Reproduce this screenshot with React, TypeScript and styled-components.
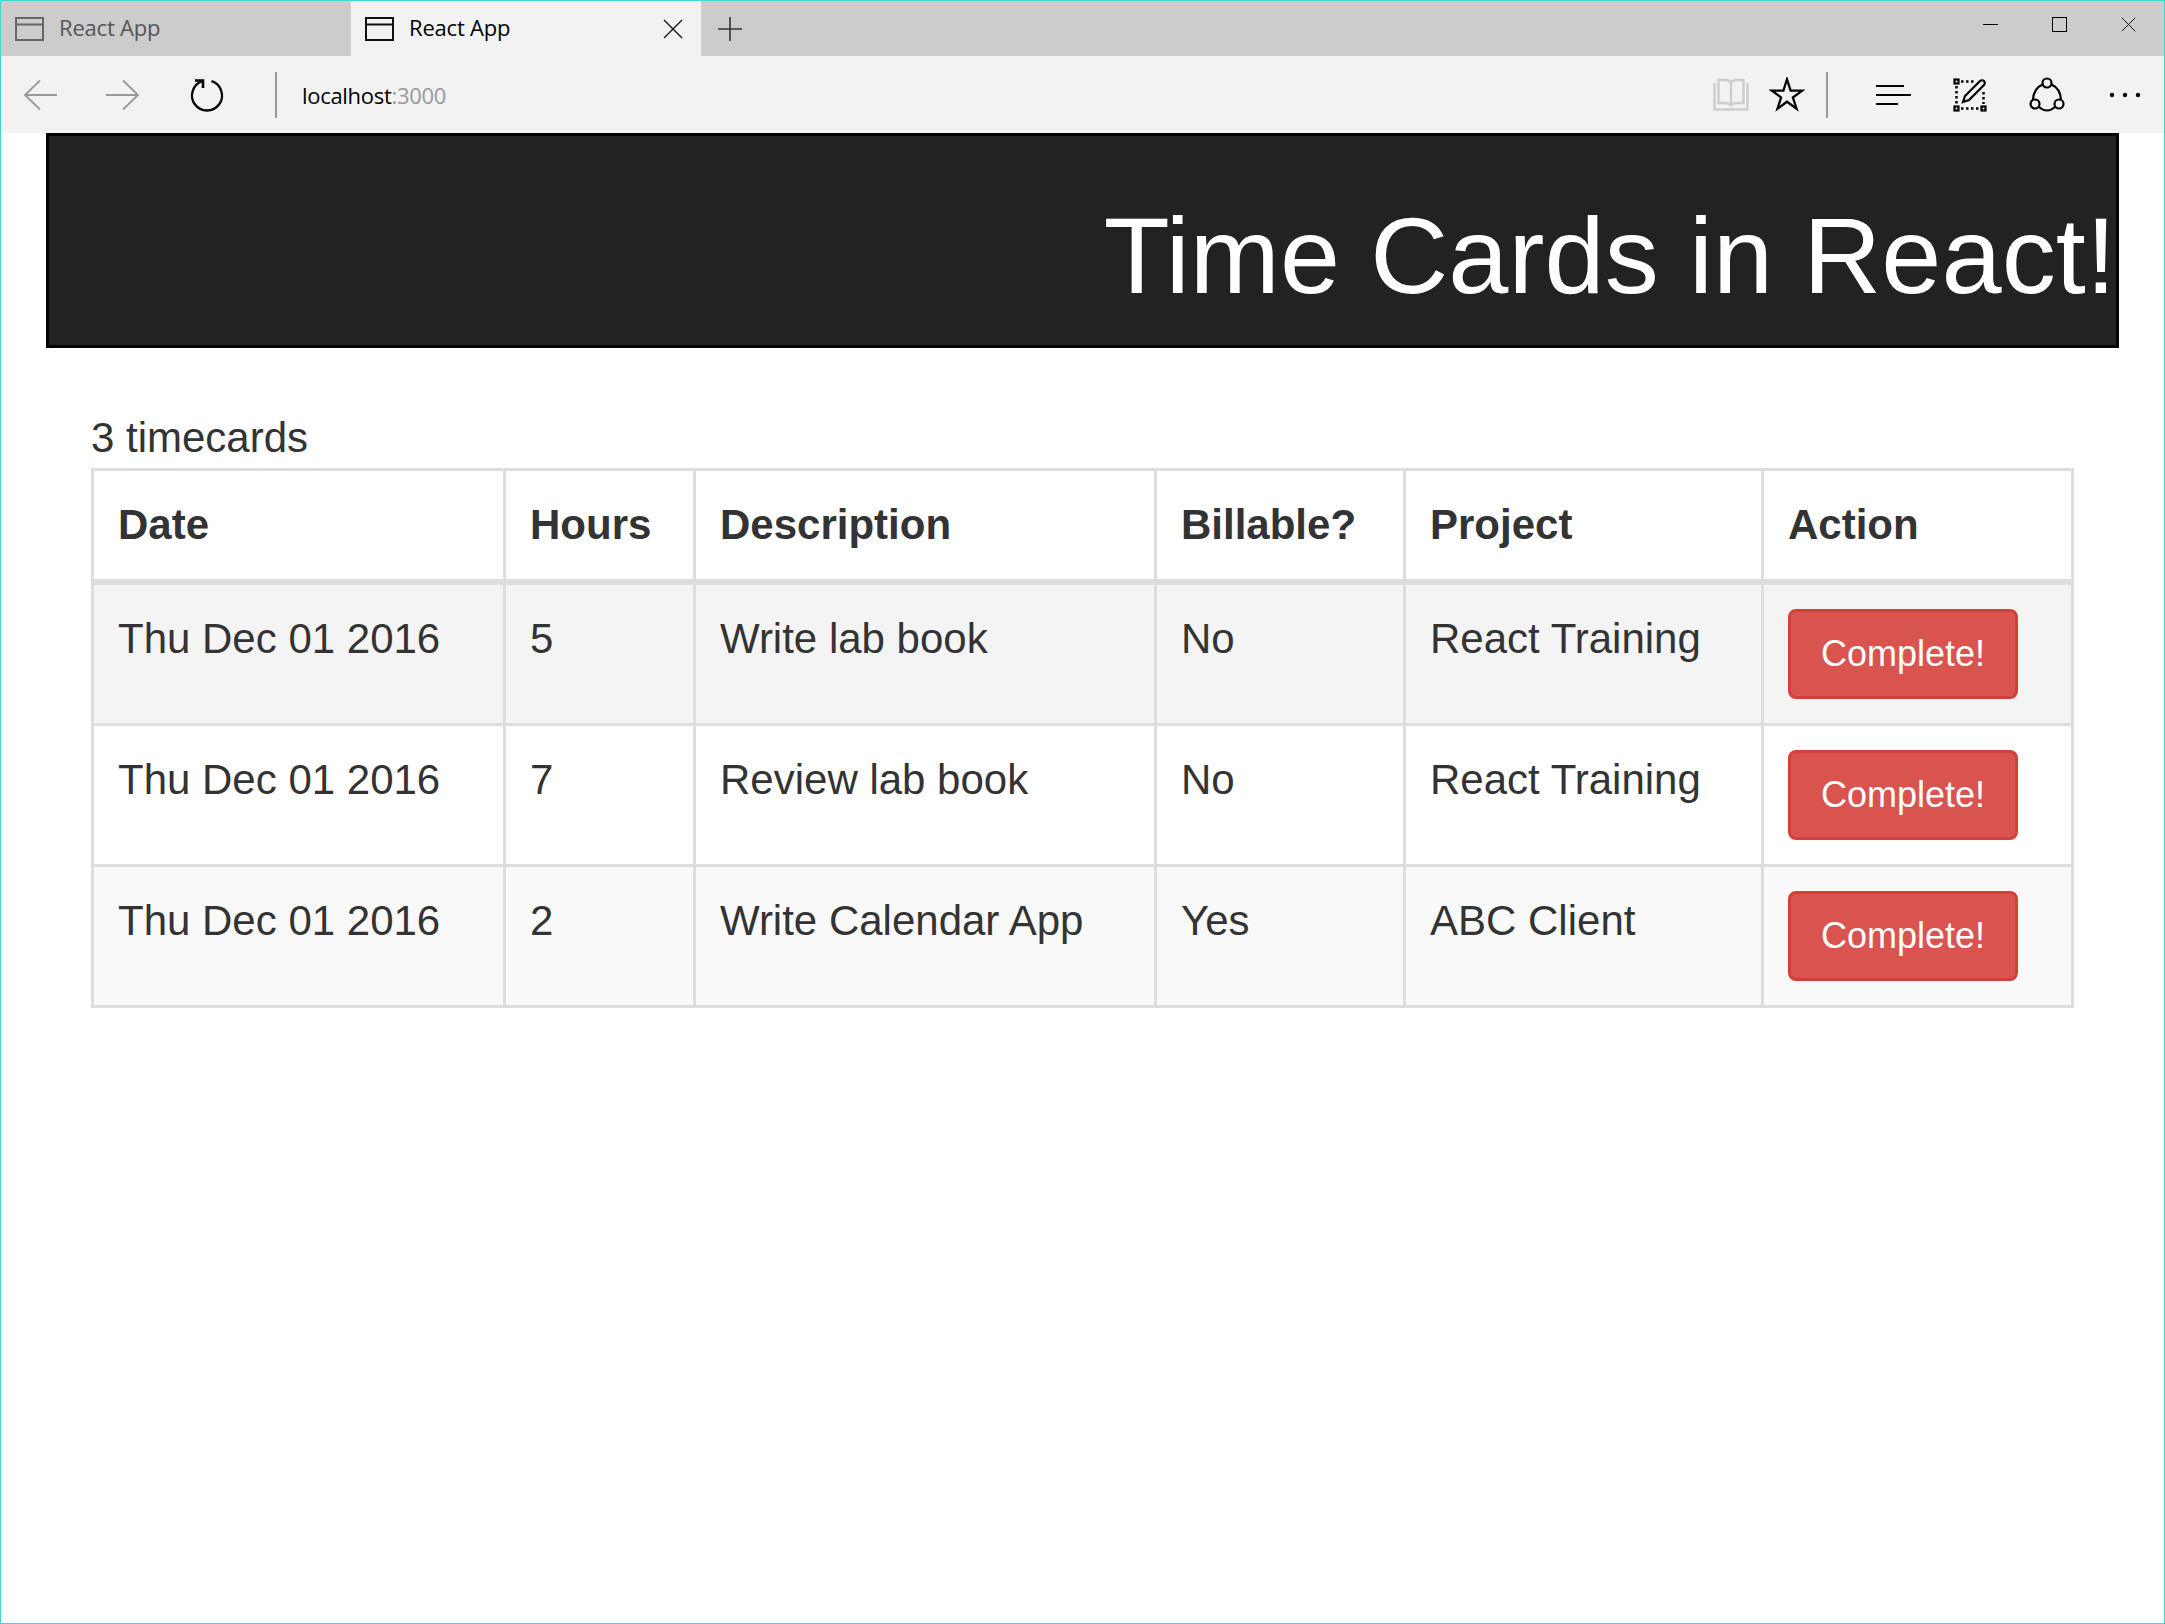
import React from 'react';
import styled, { createGlobalStyle } from 'styled-components';

const GlobalStyle = createGlobalStyle`
  html, body {
    margin: 0;
    padding: 0;
    background: #ffffff;
  }
`;

const Window = styled.div`
  box-sizing: border-box;
  width: 2165px;
  height: 1624px;
  border: 1px solid #3fd6d6;
  background: #ffffff;
  font-family: 'Liberation Sans', Arial, sans-serif;
  color: #333333;
  overflow: hidden;
`;

const TabBar = styled.div`
  display: flex;
  align-items: stretch;
  height: 55px;
  background: #cccccc;
`;

const Tab = styled.div<{ $active?: boolean }>`
  box-sizing: border-box;
  display: flex;
  align-items: center;
  width: 350px;
  padding-left: 14px;
  gap: 14px;
  background: ${(props) => (props.$active ? '#f2f2f2' : '#cccccc')};
  color: ${(props) => (props.$active ? '#000000' : '#555555')};
  font-family: 'Open Sans', 'Noto Sans', sans-serif;
  font-size: 22px;
  letter-spacing: -0.2px;
`;

const TabTitle = styled.span`
  flex: 1;
  padding-bottom: 4px;
`;

const CloseTab = styled.span`
  display: flex;
  margin-right: 18px;
`;

const NewTab = styled.span`
  display: flex;
  align-items: center;
  margin-left: 16px;
`;

const WindowControls = styled.div`
  display: flex;
  align-items: center;
  gap: 54px;
  margin-left: auto;
  padding: 0 28px 8px 0;
`;

const Toolbar = styled.div`
  display: flex;
  align-items: center;
  height: 77px;
  background: #f2f2f2;
`;

const NavGroup = styled.div`
  display: flex;
  align-items: center;
  gap: 49px;
  padding-left: 22px;
`;

const Divider = styled.span<{ $gap: number }>`
  width: 2px;
  height: 46px;
  background: #999999;
  margin-left: ${(props) => props.$gap}px;
`;

const Address = styled.div`
  flex: 1;
  margin-left: 25px;
  font-family: 'Open Sans', 'Noto Sans', sans-serif;
  font-size: 22px;
  letter-spacing: -0.3px;
  color: #000000;
`;

const Port = styled.span`
  color: #999999;
`;

const ToolGroup = styled.div`
  display: flex;
  align-items: center;
`;

const ToolSlot = styled.span<{ $left: number }>`
  display: flex;
  margin-left: ${(props) => props.$left}px;
`;

const Banner = styled.header`
  box-sizing: border-box;
  height: 215px;
  margin: 0 45px;
  padding-top: 60px;
  background: #222222;
  border: 3px solid #000000;
  text-align: right;
`;

const BannerTitle = styled.h1`
  margin: 0;
  color: #ffffff;
  font-size: 108px;
  font-weight: 400;
  line-height: 119px;
  letter-spacing: 0.1px;
`;

const Content = styled.main`
  padding: 60px 90px 0;
`;

const Count = styled.div`
  font-size: 42px;
  line-height: 60px;
`;

const Table = styled.table`
  table-layout: fixed;
  width: 1980px;
  border-collapse: collapse;
  font-size: 42px;
  line-height: 60px;
`;

const HeadCell = styled.th`
  padding: 24px;
  border: 3px solid #dddddd;
  border-bottom-width: 6px;
  text-align: left;
  font-weight: 700;
`;

const Row = styled.tr<{ $bg: string }>`
  background: ${(props) => props.$bg};
`;

const Cell = styled.td`
  padding: 24px;
  border: 3px solid #dddddd;
  vertical-align: top;
`;

const CompleteButton = styled.button`
  box-sizing: border-box;
  display: block;
  width: 230px;
  height: 90px;
  padding: 0;
  border: 3px solid #d43f3a;
  border-radius: 8px;
  background: #d9534f;
  color: #ffffff;
  font-family: inherit;
  font-size: 36px;
`;

const columns = [
  { title: 'Date', width: 412 },
  { title: 'Hours', width: 190 },
  { title: 'Description', width: 461 },
  { title: 'Billable?', width: 249 },
  { title: 'Project', width: 358 },
  { title: 'Action', width: 310 },
];

const cards = [
  { date: 'Thu Dec 01 2016', hours: 5, description: 'Write lab book', billable: 'No', project: 'React Training', bg: '#f4f4f4' },
  { date: 'Thu Dec 01 2016', hours: 7, description: 'Review lab book', billable: 'No', project: 'React Training', bg: '#ffffff' },
  { date: 'Thu Dec 01 2016', hours: 2, description: 'Write Calendar App', billable: 'Yes', project: 'ABC Client', bg: '#f9f9f9' },
];

const TabIcon: React.FC<{ color: string }> = ({ color }) => (
  <svg width="30" height="24" viewBox="0 0 30 24" fill="none" stroke={color} strokeWidth="2">
    <rect x="1" y="1" width="27" height="22" />
    <path d="M1 7.5h27" />
  </svg>
);

const Cross: React.FC<{ size: number }> = ({ size }) => (
  <svg width={size} height={size} viewBox="0 0 20 20" fill="none" stroke="#111" strokeWidth="1.3">
    <path d="M1 1l18 18M19 1L1 19" />
  </svg>
);

const PlusIcon = () => (
  <svg width="26" height="26" viewBox="0 0 26 26" fill="none" stroke="#333" strokeWidth="1.6">
    <path d="M13 1v24M1 13h24" />
  </svg>
);

const Arrow: React.FC<{ flip?: boolean }> = ({ flip }) => (
  <svg width="34" height="32" viewBox="0 0 34 32" fill="none" stroke="#999" strokeWidth="1.8" style={flip ? { transform: 'scaleX(-1)' } : undefined}>
    <path d="M17 1.5L2 16l15 14.5M2 16h32" />
  </svg>
);

const Refresh = () => (
  <svg width="36" height="34" viewBox="0 0 36 34" fill="none" stroke="#000" strokeWidth="2.3">
    <path d="M22.5 3.2A15 15 0 1 1 13.5 3.2" />
    <path d="M6 2.5h8v7.500" strokeWidth="2.600" />
  </svg>
);

const BookIcon = () => (
  <svg width="36" height="33" viewBox="0 0 36 33" fill="none" stroke="#cdcdcd" strokeWidth="2.4">
    <path d="M1.500 5v26.500h33V5" />
    <path d="M5.500 2h6.500c3 0 6 1 6 4v22c-1-2-3-3-6-3H5.500zM30.500 2H24c-3 0-6 1-6 4v22c1-2 3-3 6-3h6.500z" />
  </svg>
);

const StarIcon = () => (
  <svg width="36" height="36" viewBox="2 2 32 32" fill="none" stroke="#000" strokeWidth="2" strokeMiterlimit="6">
    <path d="M18 4l3.200 10h10.600l-8.600 6.200L26.500 30.200 18 24 9.500 30.200l3.300-10L4.200 14h10.600z" />
  </svg>
);

const HubIcon = () => (
  <svg width="36" height="22" viewBox="0 0 36 22" fill="none" stroke="#000" strokeWidth="2">
    <path d="M1 2h28M1 11h35M1 20h22" />
  </svg>
);

const NoteIcon = () => (
  <svg width="34" height="34" viewBox="0 0 34 34" fill="none" stroke="#000" strokeWidth="2.2">
    <rect x="1.500" y="1.500" width="4" height="4" />
    <rect x="1.500" y="28.500" width="4" height="4" />
    <rect x="28.500" y="28.500" width="4" height="4" />
    <path d="M8 3.500h14M3.500 8v18M8 30.500h18M30.500 14v12" strokeDasharray="2.500 2.500" strokeWidth="2.500" />
    <path d="M10 24l2-6L27 3c1-1 3-1 4 0s1 3 0 4L16 22z" />
  </svg>
);

const ShareIcon = () => (
  <svg width="36" height="36" viewBox="0 0 36 36" fill="none" stroke="#000" strokeWidth="2.2">
    <circle cx="18" cy="6" r="4.500" />
    <circle cx="6" cy="27" r="4.500" />
    <circle cx="30" cy="27" r="4.500" />
    <path d="M13.500 7.500C8 10 4.500 15 4 22.500M22.500 7.500C28 10 31.500 15 32 22.500M10 30c5 4.500 11 4.500 16 0" />
  </svg>
);

const MoreIcon = () => (
  <svg width="32" height="6" viewBox="0 0 32 6" fill="#000">
    <circle cx="3" cy="3" r="2.200" />
    <circle cx="16" cy="3" r="2.200" />
    <circle cx="29" cy="3" r="2.200" />
  </svg>
);

const MinimizeIcon = () => (
  <svg width="15" height="15" viewBox="0 0 15 15" stroke="#000" strokeWidth="1">
    <path d="M0 7.500h15" />
  </svg>
);

const MaximizeIcon = () => (
  <svg width="15" height="15" viewBox="0 0 15 15" fill="none" stroke="#000" strokeWidth="1">
    <rect x="0.500" y="0.500" width="14" height="14" />
  </svg>
);

const App: React.FC = () => {
  return (
    <Window>
      <GlobalStyle />
      <TabBar>
        <Tab>
          <TabIcon color="#666666" />
          <TabTitle>React App</TabTitle>
        </Tab>
        <Tab $active>
          <TabIcon color="#111111" />
          <TabTitle>React App</TabTitle>
          <CloseTab>
            <Cross size={20} />
          </CloseTab>
        </Tab>
        <NewTab>
          <PlusIcon />
        </NewTab>
        <WindowControls>
          <MinimizeIcon />
          <MaximizeIcon />
          <Cross size={15} />
        </WindowControls>
      </TabBar>
      <Toolbar>
        <NavGroup>
          <Arrow />
          <Arrow flip />
          <Refresh />
        </NavGroup>
        <Divider $gap={50} />
        <Address>
          localhost<Port>:3000</Port>
        </Address>
        <ToolGroup>
          <BookIcon />
          <ToolSlot $left={20}>
            <StarIcon />
          </ToolSlot>
          <Divider $gap={21} />
          <ToolSlot $left={47}>
            <HubIcon />
          </ToolSlot>
          <ToolSlot $left={42}>
            <NoteIcon />
          </ToolSlot>
          <ToolSlot $left={42}>
            <ShareIcon />
          </ToolSlot>
          <ToolSlot $left={44}>
            <MoreIcon />
          </ToolSlot>
          <ToolSlot $left={23} />
        </ToolGroup>
      </Toolbar>
      <Banner>
        <BannerTitle>Time Cards in React!</BannerTitle>
      </Banner>
      <Content>
        <Count>3 timecards</Count>
        <Table>
          <colgroup>
            {columns.map((column) => (
              <col key={column.title} width={column.width} />
            ))}
          </colgroup>
          <thead>
            <tr>
              {columns.map((column) => (
                <HeadCell key={column.title}>{column.title}</HeadCell>
              ))}
            </tr>
          </thead>
          <tbody>
            {cards.map((card) => (
              <Row key={card.description} $bg={card.bg}>
                <Cell>{card.date}</Cell>
                <Cell>{card.hours}</Cell>
                <Cell>{card.description}</Cell>
                <Cell>{card.billable}</Cell>
                <Cell>{card.project}</Cell>
                <Cell>
                  <CompleteButton>Complete!</CompleteButton>
                </Cell>
              </Row>
            ))}
          </tbody>
        </Table>
      </Content>
    </Window>
  );
};

export default App;
